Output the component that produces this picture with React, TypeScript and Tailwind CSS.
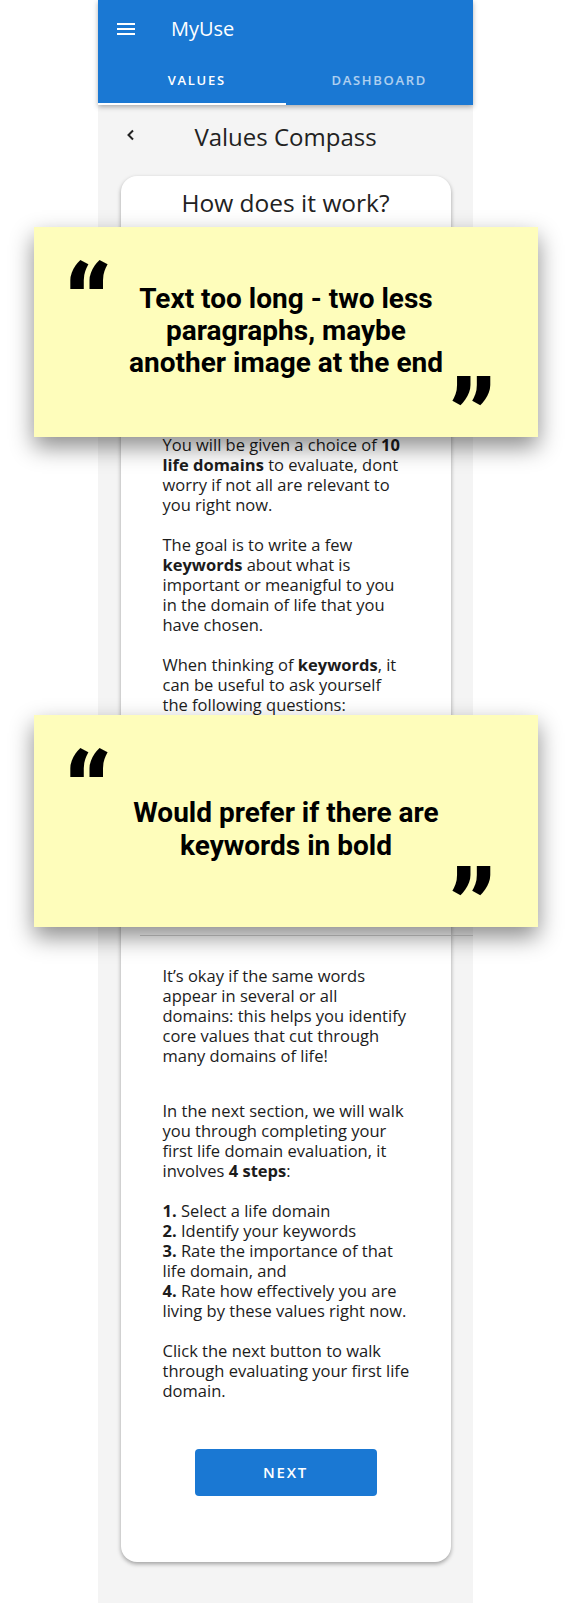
const sans = "font-['Open_Sans',_'Liberation_Sans',_sans-serif]";

function MenuIcon() {
  return (
    <svg width="24" height="24" viewBox="0 0 24 24" fill="white">
      <rect x="3" y="6" width="18" height="2" />
      <rect x="3" y="11" width="18" height="2" />
      <rect x="3" y="16" width="18" height="2" />
    </svg>
  );
}

function StickyNote({ className, children }: { className: string; children: React.ReactNode }) {
  return (
    <div
      className={
        "absolute left-[34px] w-[504px] bg-[#fefdbb] shadow-[0_10px_22px_rgba(0,0,0,0.45)] font-['Roboto',_'Liberation_Sans',_sans-serif] text-black " +
        className
      }
    >
      <span className="absolute left-[30px] top-[25px] text-[112px] leading-none font-black">“</span>
      <span className="absolute left-[414px] bottom-[-40px] text-[112px] leading-none font-black">”</span>
      {children}
    </div>
  );
}

export default function App() {
  return (
    <div className={"relative min-h-[1603px] w-full bg-white " + sans}>
      <div className="ml-[98px] w-[375px] min-h-[1603px] bg-[#f4f4f4]">
        {/* App bar */}
        <header className="bg-[#1a78d3] text-white shadow-[0_2px_5px_rgba(0,0,0,0.3)]">
          <div className="flex h-[57px] items-center pl-[16px]">
            <MenuIcon />
            <span className="ml-[33px] text-[20px] font-medium">MyUse</span>
          </div>
          <div className="grid grid-cols-2 text-[13px] font-semibold tracking-[1.7px]">
            <div className="flex h-[48px] items-center justify-center border-b-2 border-white pt-[1px] pl-[10px]">VALUES</div>
            <div className="flex h-[48px] items-center justify-center border-b-2 border-transparent pt-[1px] text-white/65">
              DASHBOARD
            </div>
          </div>
        </header>

        {/* Page title */}
        <div className="relative flex h-[64px] items-center justify-center">
          <svg
            className="absolute left-[27px] top-[24px]"
            width="12"
            height="12"
            viewBox="0 0 12 12"
            fill="none"
            stroke="#222"
            strokeWidth="2"
          >
            <path d="M8 1.5 L3.5 6 L8 10.5" />
          </svg>
          <h1 className="text-[24px] text-[#222]">Values Compass</h1>
        </div>

        {/* Card */}
        <div className="mx-auto mt-[7px] w-[330px] rounded-[16px] bg-white pt-[11px] pb-[66px] text-[#1c1c1c] shadow-[0_2px_4px_rgba(0,0,0,0.35)]">
          <h2 className="text-center text-[24.5px] leading-[32px] text-[#222]">How does it work?</h2>
          <div className="h-[216px]" />

          <div className="whitespace-nowrap pl-[42px] text-[16.5px] leading-[20px]">
            <p>
              You will be given a choice of <b>10</b>
              <br />
              <b>life domains</b> to evaluate, dont
              <br />
              worry if not all are relevant to
              <br />
              you right now.
            </p>
            <p className="mt-[20px]">
              The goal is to write a few
              <br />
              <b>keywords</b> about what is
              <br />
              important or meanigful to you
              <br />
              in the domain of life that you
              <br />
              have chosen.
            </p>
            <p className="mt-[20px]">
              When thinking of <b>keywords</b>, it
              <br />
              can be useful to ask yourself
              <br />
              the following questions:
            </p>
          </div>

          <div className="h-[220px]" />
          <hr className="ml-[19px] w-[333px] border-t border-[#cfcfcf]" />

          <div className="mt-[30px] whitespace-nowrap pl-[42px] text-[16.5px] leading-[20px]">
            <p>
              It’s okay if the same words
              <br />
              appear in several or all
              <br />
              domains: this helps you identify
              <br />
              core values that cut through
              <br />
              many domains of life!
            </p>
            <p className="mt-[35px]">
              In the next section, we will walk
              <br />
              you through completing your
              <br />
              first life domain evaluation, it
              <br />
              involves <b>4 steps</b>:
            </p>
            <p className="mt-[20px]">
              <b>1.</b> Select a life domain
              <br />
              <b>2.</b> Identify your keywords
              <br />
              <b>3.</b> Rate the importance of that
              <br />
              life domain, and
              <br />
              <b>4.</b> Rate how effectively you are
              <br />
              living by these values right now.
            </p>
            <p className="mt-[20px]">
              Click the next button to walk
              <br />
              through evaluating your first life
              <br />
              domain.
            </p>
          </div>

          <div className="mt-[48px] flex justify-center">
            <button className="h-[47px] w-[182px] rounded-[4px] bg-[#1a78d3] text-[15px] font-semibold tracking-[1.8px] text-white">
              NEXT
            </button>
          </div>
        </div>
      </div>

      {/* Review notes */}
      <StickyNote className="top-[227px] h-[210px]">
        <p className="pt-[56px] text-center text-[28px] font-bold leading-[32px]">
          Text too long - two less
          <br />
          paragraphs, maybe
          <br />
          another image at the end
        </p>
      </StickyNote>
      <StickyNote className="top-[715px] h-[212px]">
        <p className="pt-[81px] text-center text-[28px] font-bold leading-[33px]">
          Would prefer if there are
          <br />
          keywords in bold
        </p>
      </StickyNote>
    </div>
  );
}
